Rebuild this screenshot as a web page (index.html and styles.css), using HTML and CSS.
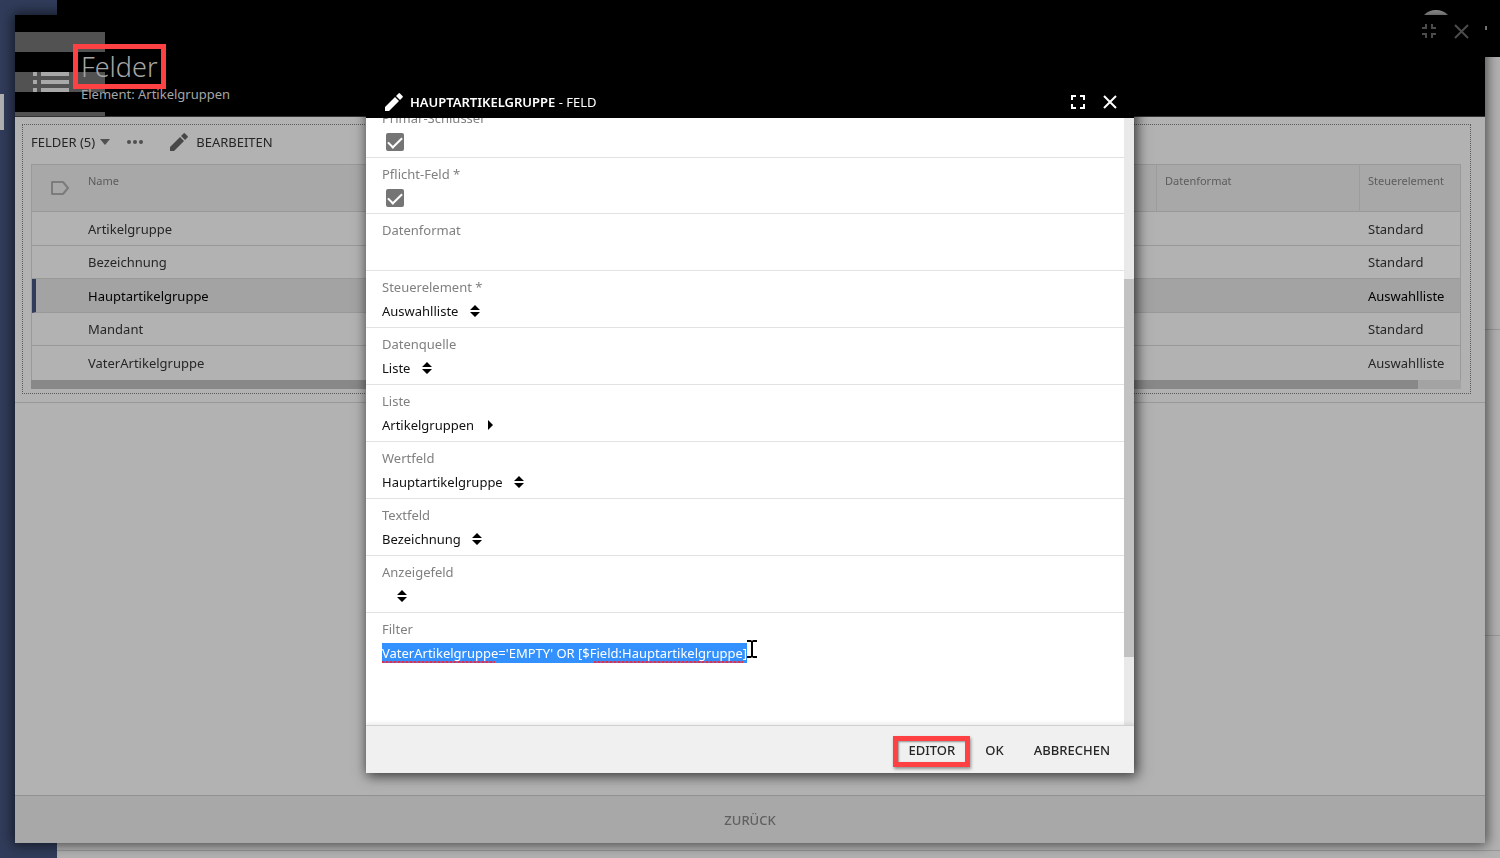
FILE: index.html
```html
<!DOCTYPE html>
<html lang="de">
<head>
  <meta charset="UTF-8">
  <meta name="viewport" content="width=device-width, initial-scale=1.0">
  <title>Felder</title>
  <link rel="stylesheet" href="styles.css">
</head>
<body>
  <!-- Application behind the dialogs -->
  <div class="app">
    <div class="app-sidebar"><span class="app-sidebar-mark"></span></div>
    <div class="app-main">
      <div class="app-header"><span class="app-avatar"></span><span class="app-dot"></span></div>
      <div class="app-content">
        <div class="app-section"></div>
        <div class="app-section app-section-list"></div>
        <div class="app-section app-section-rest"></div>
      </div>
    </div>
  </div>

  <!-- Felder dialog -->
  <div class="overlay">
    <section class="dialog">
      <header class="dialog-header">
        <div class="dialog-tile">
          <svg width="36" height="20" viewBox="0 0 36 20" fill="#a8a8a8"><path d="M0 0h4v4H0zM8 0h28v4H8zM0 8h4v4H0zM8 8h28v4H8zM0 16h4v4H0zM8 16h28v4H8z"/></svg>
        </div>
        <div class="dialog-titles">
          <h1><span class="dialog-name">Felder</span></h1>
          <p>Element: Artikelgruppen</p>
        </div>
        <div class="dialog-tools">
          <button type="button" aria-label="Verkleinern">
            <svg width="16" height="16" viewBox="0 0 16 16" fill="none" stroke="#4c4c4c" stroke-width="2"><path d="M1 5h4V1M11 1v4h4M1 11h4v4M15 11h-4v4"/></svg>
          </button>
          <button type="button" aria-label="Schließen">
            <svg width="16" height="16" viewBox="0 0 16 16" fill="none" stroke="#4c4c4c" stroke-width="2"><path d="M2 2l13 13M15 2L2 15"/></svg>
          </button>
        </div>
      </header>

      <div class="dialog-body">
        <div class="list-area">
          <div class="list-box">
            <div class="toolbar">
              <button type="button" class="toolbar-title">FELDER (5)
                <svg width="10" height="6" viewBox="0 0 10 6" fill="#505050"><path d="M0 0h10L5 6z"/></svg>
              </button>
              <button type="button" class="toolbar-more" aria-label="Mehr">
                <svg width="18" height="6" viewBox="0 0 18 6" fill="#505050"><circle cx="3" cy="3" r="2"/><circle cx="9" cy="3" r="2"/><circle cx="15" cy="3" r="2"/></svg>
              </button>
              <button type="button" class="toolbar-edit">
                <svg width="20" height="20" viewBox="0 0 20 20" fill="#484848"><path d="M1 15V19h4L15 9 11 5zM12 4L16 8l2.500-2.500a1 1 0 0 0 0-1.500L16 1.500a1 1 0 0 0-1.500 0z"/></svg>
                BEARBEITEN
              </button>
            </div>
            <table class="fields">
              <colgroup><col class="col-tag"><col><col class="col-format"><col class="col-control"></colgroup>
              <thead>
                <tr>
                  <th class="tag-cell"><svg width="20" height="16" viewBox="0 0 20 16" fill="none" stroke="#7c7c7c" stroke-width="2" stroke-linejoin="round"><path d="M2 2h11L18 8l-5 6H2z"/></svg></th>
                  <th>Name</th>
                  <th class="ruled">Datenformat</th>
                  <th class="ruled">Steuerelement</th>
                </tr>
              </thead>
              <tbody>
                <tr><td></td><td>Artikelgruppe</td><td></td><td>Standard</td></tr>
                <tr><td></td><td>Bezeichnung</td><td></td><td>Standard</td></tr>
                <tr class="selected"><td></td><td>Hauptartikelgruppe</td><td></td><td>Auswahlliste</td></tr>
                <tr><td></td><td>Mandant</td><td></td><td>Standard</td></tr>
                <tr><td></td><td>VaterArtikelgruppe</td><td></td><td>Auswahlliste</td></tr>
              </tbody>
            </table>
            <div class="hscroll"><div class="hscroll-thumb"></div></div>
          </div>
        </div>
      </div>

      <footer class="dialog-footer">
        <button type="button">ZURÜCK</button>
      </footer>
    </section>
  </div>

  <!-- Field editor -->
  <div class="overlay overlay-center">
    <section class="modal">
      <header class="modal-header">
        <svg width="20" height="20" viewBox="0 0 20 20" fill="#fff"><path d="M1 15V19h4L15 9 11 5zM12 4L16 8l2.500-2.500a1 1 0 0 0 0-1.500L16 1.500a1 1 0 0 0-1.500 0z"/></svg>
        <h2><b>HAUPTARTIKELGRUPPE</b> - FELD</h2>
        <button type="button" aria-label="Maximieren">
          <svg width="16" height="16" viewBox="0 0 16 16" fill="none" stroke="#fff" stroke-width="2"><path d="M2 6V2H6M10 2h4v4M2 10v4H6M14 10v4H10"/></svg>
        </button>
        <button type="button" aria-label="Schließen">
          <svg width="16" height="16" viewBox="0 0 16 16" fill="none" stroke="#fff" stroke-width="2"><path d="M2 2l12 12M14 2L2 14"/></svg>
        </button>
      </header>

      <div class="modal-body">
        <form class="form" autocomplete="off">
          <div class="row row-check">
            <label for="primary-key">Primär-Schlüssel</label>
            <input type="checkbox" id="primary-key" checked>
          </div>
          <div class="row row-check">
            <label for="required">Pflicht-Feld *</label>
            <input type="checkbox" id="required" checked>
          </div>
          <div class="row">
            <label for="format">Datenformat</label>
            <input type="text" id="format" class="text">
          </div>
          <div class="row">
            <label for="control">Steuerelement *</label>
            <div class="value">
              <select id="control"><option>Auswahlliste</option></select>
              <svg width="10" height="12" viewBox="0 0 10 12"><path d="M0 5l5-5 5 5zM0 7h10l-5 5z"/></svg>
            </div>
          </div>
          <div class="row">
            <label for="source">Datenquelle</label>
            <div class="value">
              <select id="source"><option>Liste</option></select>
              <svg width="10" height="12" viewBox="0 0 10 12"><path d="M0 5l5-5 5 5zM0 7h10l-5 5z"/></svg>
            </div>
          </div>
          <div class="row">
            <label for="list">Liste</label>
            <button type="button" id="list" class="value value-link">Artikelgruppen
              <svg width="10" height="12" viewBox="0 0 10 12"><path d="M3 1l5 5-5 5z"/></svg>
            </button>
          </div>
          <div class="row">
            <label for="value-field">Wertfeld</label>
            <div class="value">
              <select id="value-field"><option>Hauptartikelgruppe</option></select>
              <svg width="10" height="12" viewBox="0 0 10 12"><path d="M0 5l5-5 5 5zM0 7h10l-5 5z"/></svg>
            </div>
          </div>
          <div class="row">
            <label for="text-field">Textfeld</label>
            <div class="value">
              <select id="text-field"><option>Bezeichnung</option></select>
              <svg width="10" height="12" viewBox="0 0 10 12"><path d="M0 5l5-5 5 5zM0 7h10l-5 5z"/></svg>
            </div>
          </div>
          <div class="row">
            <label for="display-field">Anzeigefeld</label>
            <div class="value">
              <select id="display-field"><option></option></select>
              <svg width="10" height="12" viewBox="0 0 10 12"><path d="M0 5l5-5 5 5zM0 7h10l-5 5z"/></svg>
            </div>
          </div>
          <div class="row row-filter">
            <label for="filter">Filter</label>
            <div class="filter">
              <input type="text" id="filter" spellcheck="false" value="VaterArtikelgruppe='EMPTY' OR [$Field:Hauptartikelgruppe]">
              <span class="squiggle squiggle-first"></span>
              <span class="squiggle squiggle-second"></span>
              <svg class="caret" width="10" height="18" viewBox="0 0 10 18"><path d="M0 0h4l1 1 1-1h4v2H6v14h4v2H6l-1-1-1 1H0v-2h4V2H0z"/></svg>
            </div>
          </div>
        </form>
        <div class="vscroll"><div class="vscroll-thumb"></div></div>
      </div>

      <footer class="modal-footer">
        <button type="button" class="marked">EDITOR</button>
        <button type="button">OK</button>
        <button type="button">ABBRECHEN</button>
      </footer>
    </section>
  </div>
</body>
</html>
```

FILE: styles.css
```css
* { box-sizing: border-box; }
body {
  margin: 0;
  height: 100vh;
  overflow: hidden;
  font-family: "Noto Sans", "Open Sans", sans-serif;
  font-size: 13px;
  line-height: 20px;
  color: #262626;
}
h1, h2, p { margin: 0; font-weight: 400; }
svg { display: block; flex-shrink: 0; }
button, input, select {
  font: inherit;
  color: inherit;
  background: none;
  border: 0;
  margin: 0;
  padding: 0;
}
button { cursor: pointer; }

/* application behind */
.app { display: flex; height: 100vh; background: #b2b2b2; }
.app-sidebar { width: 57px; background: #303c5a; padding-top: 94px; }
.app-sidebar-mark { display: block; width: 4px; height: 36px; background: #b2b2b2; }
.app-main { flex: 1; display: flex; flex-direction: column; }
.app-header {
  height: 57px;
  background: #000;
  display: flex;
  justify-content: flex-end;
  padding: 10px 13px 0 0;
}
.app-avatar { width: 34px; height: 34px; border-radius: 50%; background: #aaa; }
.app-dot { width: 2px; height: 4px; margin: 16px 0 0 32px; background: #aaa; }
.app-content { flex: 1; display: flex; flex-direction: column; padding-bottom: 7px; }
.app-section { height: 273px; border-bottom: 1px solid #999; }
.app-section-list { height: 306px; }
.app-section-rest { flex: 1; }

/* dialogs */
.overlay { position: fixed; inset: 0; padding: 15px; display: flex; }
.overlay-center { align-items: center; justify-content: center; padding: 85px 15px; }
.dialog {
  flex: 1;
  display: flex;
  flex-direction: column;
  background: #b2b2b2;
  box-shadow: 0 0 12px 2px rgba(0, 0, 0, 0.6);
}
.dialog-header {
  display: flex;
  height: 102px;
  background: #000;
  border-bottom: 1px solid #333;
  color: #a6a6a6;
}
.dialog-tile {
  width: 90px;
  padding: 57px 0 0 18px;
  background: repeating-linear-gradient(#000 -3px 17px, #525252 17px 37px);
}
.dialog-titles { flex: 1; margin-left: -24px; padding-top: 34px; }
.dialog-titles h1 { font-size: 27px; line-height: 35px; font-weight: 300; }
.dialog-name { position: relative; }
.dialog-name::after {
  content: "";
  position: absolute;
  inset: -4px -8px;
  border: 5px solid #ff4143;
}
.dialog-tools { display: flex; gap: 16px; padding: 8px 16px 0 0; align-items: flex-start; }
.dialog-body { flex: 1; }
.list-area { padding: 7px 14px 8px 7px; border-bottom: 1px solid #999; }
.list-box { border: 1px dotted #5a5a5a; padding: 0 9px 4px 8px; }
.toolbar { display: flex; align-items: center; height: 39px; padding-bottom: 6px; }
.toolbar button { display: flex; align-items: center; }
.toolbar-title { gap: 5px; }
.toolbar-more { margin-left: 16px; }
.toolbar-edit { gap: 7px; margin-left: 25px; }

.fields {
  width: 100%;
  table-layout: fixed;
  border-spacing: 0;
  border: 1px solid #999;
  border-bottom: 0;
}
.col-tag { width: 48px; }
.col-format { width: 203px; }
.col-control { width: 101px; }
.fields th {
  height: 47px;
  padding: 6px 8px;
  background: #a8a8a8;
  border-bottom: 1px solid #999;
  color: #5c5c5c;
  font-size: 11px;
  font-weight: 400;
  text-align: left;
  vertical-align: top;
}
.fields th.tag-cell { padding: 15px 0 0 18px; }
.fields th.ruled { border-left: 1px solid #9c9c9c; }
.fields td { height: 33px; padding: 0 8px; border-bottom: 1px solid #999; }
.fields td:last-child { padding-left: 9px; }
.fields tr:nth-child(odd) td { height: 34px; }
.fields tr:last-child td { border-bottom: 0; }
.fields .selected td { background: #a3a3a3; color: #000; }
.fields .selected td:first-child { border-left: 4px solid #303c5a; }
.hscroll { height: 9px; background: #a3a3a3; }
.hscroll-thumb { width: 97%; height: 100%; background: #888; }

.dialog-footer {
  display: flex;
  justify-content: center;
  height: 48px;
  background: #a8a8a8;
  border-top: 1px solid #919191;
  color: #606060;
  font-weight: 500;
}

/* field editor */
.modal {
  display: flex;
  flex-direction: column;
  width: 100%;
  max-width: 768px;
  height: 100%;
  background: #fff;
  box-shadow: 2px 2px 12px 1px rgba(0, 0, 0, 0.7);
}
.modal-header {
  display: flex;
  align-items: center;
  gap: 16px;
  height: 33px;
  padding: 0 16px 0 18px;
  background: #000;
  color: #fff;
}
.modal-header h2 { flex: 1; margin-left: -10px; font-size: 13px; }
.modal-header b { font-weight: 600; }
.modal-body { flex: 1; min-height: 0; display: flex; overflow: hidden; }
/* scrolled down so that the first row is cut by the header */
.form { flex: 1; margin-top: -16px; }
.row {
  display: flex;
  flex-direction: column;
  align-items: flex-start;
  gap: 4px;
  height: 57px;
  padding: 6px 16px 0;
  border-bottom: 1px solid #e2e2e2;
}
.row label { color: #808080; }
.row-check { height: 56px; gap: 5px; }
.row-check input {
  appearance: none;
  width: 18px;
  height: 18px;
  margin-left: 4px;
  border-radius: 2px;
  background: #757575;
  display: grid;
  place-items: center;
}
.row-check input::after {
  content: "";
  width: 12px;
  height: 6px;
  margin-bottom: 2px;
  border: solid #fff;
  border-width: 0 0 2px 2px;
  rotate: -45deg;
}
.text { width: 100%; outline: none; }
.value { display: flex; align-items: center; gap: 11px; height: 20px; color: #111; }
.value select { appearance: none; min-width: 4px; outline: none; }
.row-filter { border-bottom: 0; }
.filter { position: relative; display: flex; }
.filter input {
  field-sizing: content;
  height: 20px;
  line-height: 20px;
  background: #3390ff;
  color: #fff;
  outline: none;
}
.squiggle {
  position: absolute;
  bottom: 0;
  height: 2px;
  background: repeating-linear-gradient(90deg, #e0304a 0 2px, #8a60b0 2px 4px);
}
.squiggle-first { left: 0; width: 31%; }
.squiggle-second { left: 58%; right: 1%; }
.caret { position: absolute; left: 100%; top: -3px; }

.vscroll { width: 10px; padding-top: 161px; background: #e9e9e9; }
.vscroll-thumb { height: 378px; background: #c2c2c2; }
.modal-footer {
  display: flex;
  justify-content: flex-end;
  align-items: center;
  gap: 30px;
  height: 48px;
  padding: 0 24px 0 16px;
  background: #f0f0f0;
  border-top: 1px solid #d0d0d0;
  box-shadow: 0 -2px 4px rgba(0, 0, 0, 0.08);
  font-weight: 500;
}
.marked { position: relative; }
.marked::after {
  content: "";
  position: absolute;
  inset: -4px -15px -7px;
  border: 5px solid #ff4143;
  box-shadow: 1px 2px 3px rgba(0, 0, 0, 0.4), inset 1px 1px 2px rgba(0, 0, 0, 0.4);
}
```
